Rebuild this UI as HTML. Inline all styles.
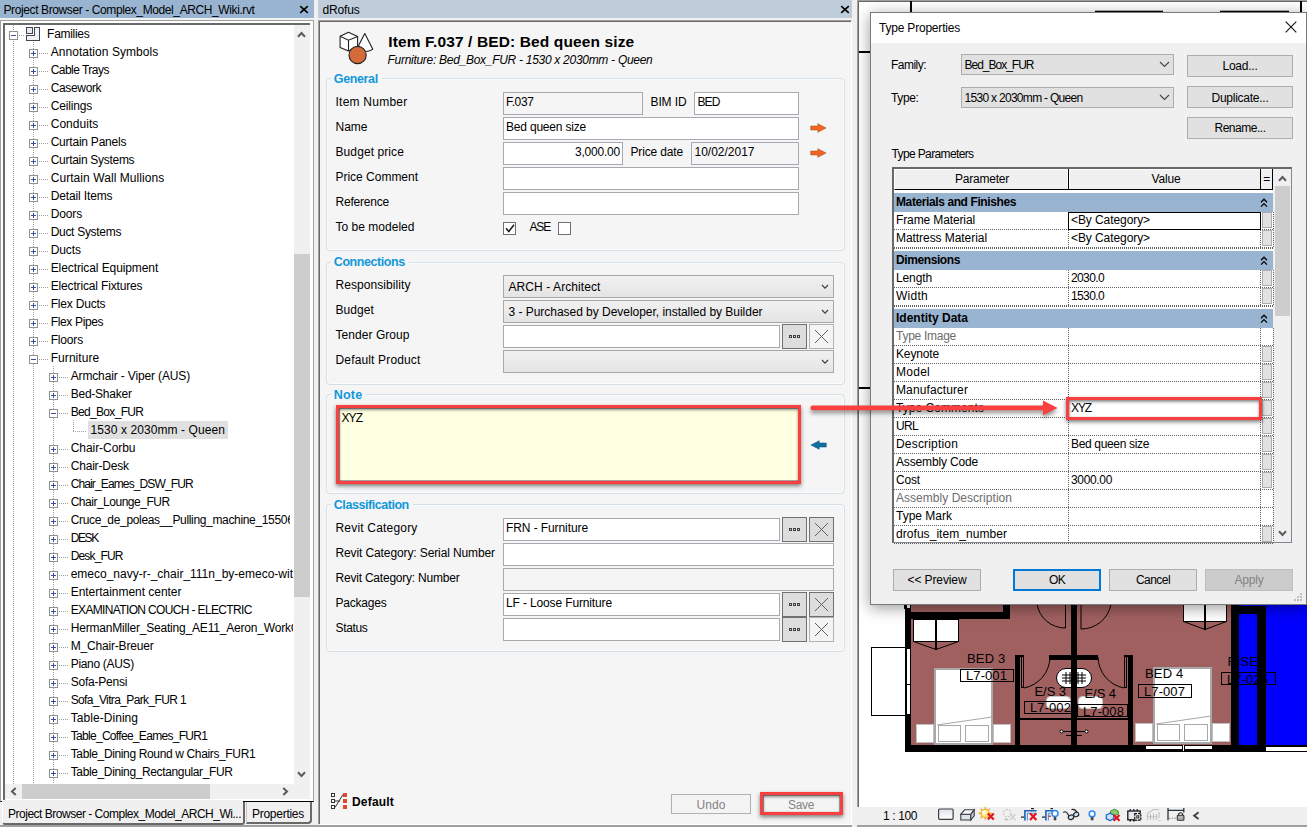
<!DOCTYPE html>
<html lang="en"><head><meta charset="utf-8"><title>dRofus - Type Properties</title>
<style>
html,body{margin:0;padding:0}
body{width:1307px;height:827px;position:relative;overflow:hidden;background:#f0f0f0;font-family:"Liberation Sans", sans-serif;font-size:12px;color:#000}
.t{position:absolute;white-space:pre;display:block}
.r{position:absolute;box-sizing:border-box}
svg{position:absolute;overflow:visible}
</style></head><body>
<div class="r" style="left:0px;top:0px;width:314px;height:18px;background:#99b4d1;"></div>
<span class="t" style="left:3.5px;top:3px;font-size:12px;line-height:15px;letter-spacing:-0.394px;">Project Browser - Complex_Model_ARCH_Wiki.rvt</span>
<svg style="left:299px;top:5px" width="10" height="9" viewBox="0 0 10 9"><path d="M1.2 1.2 L8.8 7.8 M8.8 1.2 L1.2 7.8" stroke="#000" stroke-width="1.7" fill="none"/></svg>
<div class="r" style="left:0px;top:20px;width:314px;height:782px;background:#fff;border:1px solid #a0a0a0;border-bottom:1px solid #000;"></div>
<div class="r" style="left:3px;top:23px;width:307px;height:777px;background:#fff;border-top:2px solid #696969;border-left:2px solid #696969;"></div>
<div class="r" style="left:294px;top:25px;width:16px;height:759px;background:#f0f0f0;"></div>
<div class="r" style="left:294px;top:254px;width:16px;height:343px;background:#cdcdcd;"></div>
<svg style="left:297px;top:31px" width="9" height="7" viewBox="0 0 9 7"><path d="M1 5.700 L4.500 2 L8 5.7" stroke="#5a5a5a" stroke-width="2" fill="none"/></svg>
<svg style="left:297px;top:771px" width="9" height="7" viewBox="0 0 9 7"><path d="M1 1.300 L4.500 5 L8 1.3" stroke="#5a5a5a" stroke-width="2" fill="none"/></svg>
<div class="r" style="left:5px;top:784px;width:289px;height:15px;background:#f0f0f0;"></div>
<div class="r" style="left:294px;top:784px;width:16px;height:15px;background:#f0f0f0;"></div>
<div class="r" style="left:22px;top:784px;width:188px;height:15px;background:#cdcdcd;"></div>
<svg style="left:9.500px;top:787px" width="7" height="9" viewBox="0 0 7 9"><path d="M5.700 1 L2 4.500 L5.7 8" stroke="#5a5a5a" stroke-width="2" fill="none"/></svg>
<svg style="left:281.500px;top:787px" width="7" height="9" viewBox="0 0 7 9"><path d="M1.300 1 L5 4.500 L1.3 8" stroke="#5a5a5a" stroke-width="2" fill="none"/></svg>
<span class="t" style="left:47.1px;top:27px;font-size:12px;line-height:15px;letter-spacing:-0.296px;">Families</span>
<span class="t" style="left:50.7px;top:45px;font-size:12px;line-height:15px;letter-spacing:0.043px;">Annotation Symbols</span>
<span class="t" style="left:50.7px;top:63px;font-size:12px;line-height:15px;letter-spacing:-0.530px;">Cable Trays</span>
<span class="t" style="left:50.7px;top:81px;font-size:12px;line-height:15px;letter-spacing:-0.345px;">Casework</span>
<span class="t" style="left:50.7px;top:99px;font-size:12px;line-height:15px;letter-spacing:-0.148px;">Ceilings</span>
<span class="t" style="left:50.7px;top:117px;font-size:12px;line-height:15px;letter-spacing:0.028px;">Conduits</span>
<span class="t" style="left:50.7px;top:135px;font-size:12px;line-height:15px;letter-spacing:-0.230px;">Curtain Panels</span>
<span class="t" style="left:50.7px;top:153px;font-size:12px;line-height:15px;letter-spacing:-0.295px;">Curtain Systems</span>
<span class="t" style="left:50.7px;top:171px;font-size:12px;line-height:15px;letter-spacing:0.064px;">Curtain Wall Mullions</span>
<span class="t" style="left:50.7px;top:189px;font-size:12px;line-height:15px;letter-spacing:-0.130px;">Detail Items</span>
<span class="t" style="left:50.7px;top:207px;font-size:12px;line-height:15px;letter-spacing:-0.143px;">Doors</span>
<span class="t" style="left:50.7px;top:225px;font-size:12px;line-height:15px;letter-spacing:-0.301px;">Duct Systems</span>
<span class="t" style="left:50.7px;top:243px;font-size:12px;line-height:15px;letter-spacing:-0.077px;">Ducts</span>
<span class="t" style="left:50.7px;top:261px;font-size:12px;line-height:15px;letter-spacing:-0.095px;">Electrical Equipment</span>
<span class="t" style="left:50.7px;top:279px;font-size:12px;line-height:15px;letter-spacing:-0.157px;">Electrical Fixtures</span>
<span class="t" style="left:50.7px;top:297px;font-size:12px;line-height:15px;letter-spacing:-0.199px;">Flex Ducts</span>
<span class="t" style="left:50.7px;top:315px;font-size:12px;line-height:15px;letter-spacing:-0.343px;">Flex Pipes</span>
<span class="t" style="left:50.7px;top:333px;font-size:12px;line-height:15px;letter-spacing:-0.174px;">Floors</span>
<span class="t" style="left:50.7px;top:351px;font-size:12px;line-height:15px;letter-spacing:0.063px;">Furniture</span>
<span class="t" style="left:70.7px;top:369px;font-size:12px;line-height:15px;letter-spacing:-0.144px;">Armchair - Viper (AUS)</span>
<span class="t" style="left:70.7px;top:387px;font-size:12px;line-height:15px;letter-spacing:-0.237px;">Bed-Shaker</span>
<span class="t" style="left:70.7px;top:405px;font-size:12px;line-height:15px;letter-spacing:-0.677px;">Bed_Box_FUR</span>
<div class="r" style="left:88px;top:421px;width:140px;height:18px;background:#e0e0e0;"></div>
<span class="t" style="left:90.4px;top:423px;font-size:12px;line-height:15px;letter-spacing:0.093px;">1530 x 2030mm - Queen</span>
<span class="t" style="left:70.7px;top:441px;font-size:12px;line-height:15px;letter-spacing:-0.051px;">Chair-Corbu</span>
<span class="t" style="left:70.7px;top:459px;font-size:12px;line-height:15px;letter-spacing:-0.192px;">Chair-Desk</span>
<span class="t" style="left:70.7px;top:477px;font-size:12px;line-height:15px;letter-spacing:-0.874px;">Chair_Eames_DSW_FUR</span>
<span class="t" style="left:70.7px;top:495px;font-size:12px;line-height:15px;letter-spacing:-0.490px;">Chair_Lounge_FUR</span>
<span class="t" style="left:70.7px;top:513px;font-size:12px;line-height:15px;width:219.10000000000002px;overflow:hidden;letter-spacing:-0.335px;">Cruce_de_poleas__Pulling_machine_155063</span>
<span class="t" style="left:70.7px;top:531px;font-size:12px;line-height:15px;letter-spacing:-1.397px;">DESK</span>
<span class="t" style="left:70.7px;top:549px;font-size:12px;line-height:15px;letter-spacing:-0.848px;">Desk_FUR</span>
<span class="t" style="left:70.7px;top:567px;font-size:12px;line-height:15px;width:222.10000000000002px;overflow:hidden;letter-spacing:-0.001px;">emeco_navy-r-_chair_111n_by-emeco-with</span>
<span class="t" style="left:70.7px;top:585px;font-size:12px;line-height:15px;letter-spacing:-0.030px;">Entertainment center</span>
<span class="t" style="left:70.7px;top:603px;font-size:12px;line-height:15px;letter-spacing:-0.647px;">EXAMINATION COUCH - ELECTRIC</span>
<span class="t" style="left:70.7px;top:621px;font-size:12px;line-height:15px;width:222.10000000000002px;overflow:hidden;letter-spacing:-0.193px;">HermanMiller_Seating_AE11_Aeron_WorkChair</span>
<span class="t" style="left:70.7px;top:639px;font-size:12px;line-height:15px;letter-spacing:-0.176px;">M_Chair-Breuer</span>
<span class="t" style="left:70.7px;top:657px;font-size:12px;line-height:15px;letter-spacing:-0.309px;">Piano (AUS)</span>
<span class="t" style="left:70.7px;top:675px;font-size:12px;line-height:15px;letter-spacing:-0.220px;">Sofa-Pensi</span>
<span class="t" style="left:70.7px;top:693px;font-size:12px;line-height:15px;letter-spacing:-0.625px;">Sofa_Vitra_Park_FUR 1</span>
<span class="t" style="left:70.7px;top:711px;font-size:12px;line-height:15px;letter-spacing:0.058px;">Table-Dining</span>
<span class="t" style="left:70.7px;top:729px;font-size:12px;line-height:15px;letter-spacing:-0.693px;">Table_Coffee_Eames_FUR1</span>
<span class="t" style="left:70.7px;top:747px;font-size:12px;line-height:15px;letter-spacing:-0.360px;">Table_Dining Round w Chairs_FUR1</span>
<span class="t" style="left:70.7px;top:765px;font-size:12px;line-height:15px;letter-spacing:-0.365px;">Table_Dining_Rectangular_FUR</span>
<svg style="left:0;top:0" width="314" height="800" viewBox="0 0 314 800" shape-rendering="crispEdges"><path d="M13.5 25 V784" stroke="#a0a0a0" stroke-width="1" stroke-dasharray="1 1" fill="none"/><path d="M33.5 42 V784" stroke="#a0a0a0" stroke-width="1" stroke-dasharray="1 1" fill="none"/><path d="M53.5 366 V784" stroke="#a0a0a0" stroke-width="1" stroke-dasharray="1 1" fill="none"/><path d="M73.5 420 V431" stroke="#a0a0a0" stroke-width="1" stroke-dasharray="1 1" fill="none"/><path d="M19 35.5 H25" stroke="#a0a0a0" stroke-width="1" stroke-dasharray="1 1" fill="none"/><rect x="9.5" y="31.5" width="8" height="8" rx="1" fill="#fff" stroke="#919191"/><path d="M11 35.5 H16" stroke="#3a4fa0" stroke-width="1"/><path d="M39 53.5 H48" stroke="#a0a0a0" stroke-width="1" stroke-dasharray="1 1" fill="none"/><rect x="29.5" y="49.5" width="8" height="8" rx="1" fill="#fff" stroke="#919191"/><path d="M31 53.5 H36" stroke="#3a4fa0" stroke-width="1"/><path d="M33.5 51 V56" stroke="#3a4fa0" stroke-width="1"/><path d="M39 71.5 H48" stroke="#a0a0a0" stroke-width="1" stroke-dasharray="1 1" fill="none"/><rect x="29.5" y="67.5" width="8" height="8" rx="1" fill="#fff" stroke="#919191"/><path d="M31 71.5 H36" stroke="#3a4fa0" stroke-width="1"/><path d="M33.5 69 V74" stroke="#3a4fa0" stroke-width="1"/><path d="M39 89.5 H48" stroke="#a0a0a0" stroke-width="1" stroke-dasharray="1 1" fill="none"/><rect x="29.5" y="85.5" width="8" height="8" rx="1" fill="#fff" stroke="#919191"/><path d="M31 89.5 H36" stroke="#3a4fa0" stroke-width="1"/><path d="M33.5 87 V92" stroke="#3a4fa0" stroke-width="1"/><path d="M39 107.5 H48" stroke="#a0a0a0" stroke-width="1" stroke-dasharray="1 1" fill="none"/><rect x="29.5" y="103.5" width="8" height="8" rx="1" fill="#fff" stroke="#919191"/><path d="M31 107.5 H36" stroke="#3a4fa0" stroke-width="1"/><path d="M33.5 105 V110" stroke="#3a4fa0" stroke-width="1"/><path d="M39 125.5 H48" stroke="#a0a0a0" stroke-width="1" stroke-dasharray="1 1" fill="none"/><rect x="29.5" y="121.5" width="8" height="8" rx="1" fill="#fff" stroke="#919191"/><path d="M31 125.5 H36" stroke="#3a4fa0" stroke-width="1"/><path d="M33.5 123 V128" stroke="#3a4fa0" stroke-width="1"/><path d="M39 143.5 H48" stroke="#a0a0a0" stroke-width="1" stroke-dasharray="1 1" fill="none"/><rect x="29.5" y="139.5" width="8" height="8" rx="1" fill="#fff" stroke="#919191"/><path d="M31 143.5 H36" stroke="#3a4fa0" stroke-width="1"/><path d="M33.5 141 V146" stroke="#3a4fa0" stroke-width="1"/><path d="M39 161.5 H48" stroke="#a0a0a0" stroke-width="1" stroke-dasharray="1 1" fill="none"/><rect x="29.5" y="157.5" width="8" height="8" rx="1" fill="#fff" stroke="#919191"/><path d="M31 161.5 H36" stroke="#3a4fa0" stroke-width="1"/><path d="M33.5 159 V164" stroke="#3a4fa0" stroke-width="1"/><path d="M39 179.5 H48" stroke="#a0a0a0" stroke-width="1" stroke-dasharray="1 1" fill="none"/><rect x="29.5" y="175.5" width="8" height="8" rx="1" fill="#fff" stroke="#919191"/><path d="M31 179.5 H36" stroke="#3a4fa0" stroke-width="1"/><path d="M33.5 177 V182" stroke="#3a4fa0" stroke-width="1"/><path d="M39 197.5 H48" stroke="#a0a0a0" stroke-width="1" stroke-dasharray="1 1" fill="none"/><rect x="29.5" y="193.5" width="8" height="8" rx="1" fill="#fff" stroke="#919191"/><path d="M31 197.5 H36" stroke="#3a4fa0" stroke-width="1"/><path d="M33.5 195 V200" stroke="#3a4fa0" stroke-width="1"/><path d="M39 215.5 H48" stroke="#a0a0a0" stroke-width="1" stroke-dasharray="1 1" fill="none"/><rect x="29.5" y="211.5" width="8" height="8" rx="1" fill="#fff" stroke="#919191"/><path d="M31 215.5 H36" stroke="#3a4fa0" stroke-width="1"/><path d="M33.5 213 V218" stroke="#3a4fa0" stroke-width="1"/><path d="M39 233.5 H48" stroke="#a0a0a0" stroke-width="1" stroke-dasharray="1 1" fill="none"/><rect x="29.5" y="229.5" width="8" height="8" rx="1" fill="#fff" stroke="#919191"/><path d="M31 233.5 H36" stroke="#3a4fa0" stroke-width="1"/><path d="M33.5 231 V236" stroke="#3a4fa0" stroke-width="1"/><path d="M39 251.5 H48" stroke="#a0a0a0" stroke-width="1" stroke-dasharray="1 1" fill="none"/><rect x="29.5" y="247.5" width="8" height="8" rx="1" fill="#fff" stroke="#919191"/><path d="M31 251.5 H36" stroke="#3a4fa0" stroke-width="1"/><path d="M33.5 249 V254" stroke="#3a4fa0" stroke-width="1"/><path d="M39 269.5 H48" stroke="#a0a0a0" stroke-width="1" stroke-dasharray="1 1" fill="none"/><rect x="29.5" y="265.5" width="8" height="8" rx="1" fill="#fff" stroke="#919191"/><path d="M31 269.5 H36" stroke="#3a4fa0" stroke-width="1"/><path d="M33.5 267 V272" stroke="#3a4fa0" stroke-width="1"/><path d="M39 287.5 H48" stroke="#a0a0a0" stroke-width="1" stroke-dasharray="1 1" fill="none"/><rect x="29.5" y="283.5" width="8" height="8" rx="1" fill="#fff" stroke="#919191"/><path d="M31 287.5 H36" stroke="#3a4fa0" stroke-width="1"/><path d="M33.5 285 V290" stroke="#3a4fa0" stroke-width="1"/><path d="M39 305.5 H48" stroke="#a0a0a0" stroke-width="1" stroke-dasharray="1 1" fill="none"/><rect x="29.5" y="301.5" width="8" height="8" rx="1" fill="#fff" stroke="#919191"/><path d="M31 305.5 H36" stroke="#3a4fa0" stroke-width="1"/><path d="M33.5 303 V308" stroke="#3a4fa0" stroke-width="1"/><path d="M39 323.5 H48" stroke="#a0a0a0" stroke-width="1" stroke-dasharray="1 1" fill="none"/><rect x="29.5" y="319.5" width="8" height="8" rx="1" fill="#fff" stroke="#919191"/><path d="M31 323.5 H36" stroke="#3a4fa0" stroke-width="1"/><path d="M33.5 321 V326" stroke="#3a4fa0" stroke-width="1"/><path d="M39 341.5 H48" stroke="#a0a0a0" stroke-width="1" stroke-dasharray="1 1" fill="none"/><rect x="29.5" y="337.5" width="8" height="8" rx="1" fill="#fff" stroke="#919191"/><path d="M31 341.5 H36" stroke="#3a4fa0" stroke-width="1"/><path d="M33.5 339 V344" stroke="#3a4fa0" stroke-width="1"/><path d="M39 359.5 H48" stroke="#a0a0a0" stroke-width="1" stroke-dasharray="1 1" fill="none"/><rect x="29.5" y="355.5" width="8" height="8" rx="1" fill="#fff" stroke="#919191"/><path d="M31 359.5 H36" stroke="#3a4fa0" stroke-width="1"/><path d="M59 377.5 H68" stroke="#a0a0a0" stroke-width="1" stroke-dasharray="1 1" fill="none"/><rect x="49.5" y="373.5" width="8" height="8" rx="1" fill="#fff" stroke="#919191"/><path d="M51 377.5 H56" stroke="#3a4fa0" stroke-width="1"/><path d="M53.5 375 V380" stroke="#3a4fa0" stroke-width="1"/><path d="M59 395.5 H68" stroke="#a0a0a0" stroke-width="1" stroke-dasharray="1 1" fill="none"/><rect x="49.5" y="391.5" width="8" height="8" rx="1" fill="#fff" stroke="#919191"/><path d="M51 395.5 H56" stroke="#3a4fa0" stroke-width="1"/><path d="M53.5 393 V398" stroke="#3a4fa0" stroke-width="1"/><path d="M59 413.5 H68" stroke="#a0a0a0" stroke-width="1" stroke-dasharray="1 1" fill="none"/><rect x="49.5" y="409.5" width="8" height="8" rx="1" fill="#fff" stroke="#919191"/><path d="M51 413.5 H56" stroke="#3a4fa0" stroke-width="1"/><path d="M73 431.5 H87" stroke="#a0a0a0" stroke-width="1" stroke-dasharray="1 1" fill="none"/><path d="M59 449.5 H68" stroke="#a0a0a0" stroke-width="1" stroke-dasharray="1 1" fill="none"/><rect x="49.5" y="445.5" width="8" height="8" rx="1" fill="#fff" stroke="#919191"/><path d="M51 449.5 H56" stroke="#3a4fa0" stroke-width="1"/><path d="M53.5 447 V452" stroke="#3a4fa0" stroke-width="1"/><path d="M59 467.5 H68" stroke="#a0a0a0" stroke-width="1" stroke-dasharray="1 1" fill="none"/><rect x="49.5" y="463.5" width="8" height="8" rx="1" fill="#fff" stroke="#919191"/><path d="M51 467.5 H56" stroke="#3a4fa0" stroke-width="1"/><path d="M53.5 465 V470" stroke="#3a4fa0" stroke-width="1"/><path d="M59 485.5 H68" stroke="#a0a0a0" stroke-width="1" stroke-dasharray="1 1" fill="none"/><rect x="49.5" y="481.5" width="8" height="8" rx="1" fill="#fff" stroke="#919191"/><path d="M51 485.5 H56" stroke="#3a4fa0" stroke-width="1"/><path d="M53.5 483 V488" stroke="#3a4fa0" stroke-width="1"/><path d="M59 503.5 H68" stroke="#a0a0a0" stroke-width="1" stroke-dasharray="1 1" fill="none"/><rect x="49.5" y="499.5" width="8" height="8" rx="1" fill="#fff" stroke="#919191"/><path d="M51 503.5 H56" stroke="#3a4fa0" stroke-width="1"/><path d="M53.5 501 V506" stroke="#3a4fa0" stroke-width="1"/><path d="M59 521.5 H68" stroke="#a0a0a0" stroke-width="1" stroke-dasharray="1 1" fill="none"/><rect x="49.5" y="517.5" width="8" height="8" rx="1" fill="#fff" stroke="#919191"/><path d="M51 521.5 H56" stroke="#3a4fa0" stroke-width="1"/><path d="M53.5 519 V524" stroke="#3a4fa0" stroke-width="1"/><path d="M59 539.5 H68" stroke="#a0a0a0" stroke-width="1" stroke-dasharray="1 1" fill="none"/><rect x="49.5" y="535.5" width="8" height="8" rx="1" fill="#fff" stroke="#919191"/><path d="M51 539.5 H56" stroke="#3a4fa0" stroke-width="1"/><path d="M53.5 537 V542" stroke="#3a4fa0" stroke-width="1"/><path d="M59 557.5 H68" stroke="#a0a0a0" stroke-width="1" stroke-dasharray="1 1" fill="none"/><rect x="49.5" y="553.5" width="8" height="8" rx="1" fill="#fff" stroke="#919191"/><path d="M51 557.5 H56" stroke="#3a4fa0" stroke-width="1"/><path d="M53.5 555 V560" stroke="#3a4fa0" stroke-width="1"/><path d="M59 575.5 H68" stroke="#a0a0a0" stroke-width="1" stroke-dasharray="1 1" fill="none"/><rect x="49.5" y="571.5" width="8" height="8" rx="1" fill="#fff" stroke="#919191"/><path d="M51 575.5 H56" stroke="#3a4fa0" stroke-width="1"/><path d="M53.5 573 V578" stroke="#3a4fa0" stroke-width="1"/><path d="M59 593.5 H68" stroke="#a0a0a0" stroke-width="1" stroke-dasharray="1 1" fill="none"/><rect x="49.5" y="589.5" width="8" height="8" rx="1" fill="#fff" stroke="#919191"/><path d="M51 593.5 H56" stroke="#3a4fa0" stroke-width="1"/><path d="M53.5 591 V596" stroke="#3a4fa0" stroke-width="1"/><path d="M59 611.5 H68" stroke="#a0a0a0" stroke-width="1" stroke-dasharray="1 1" fill="none"/><rect x="49.5" y="607.5" width="8" height="8" rx="1" fill="#fff" stroke="#919191"/><path d="M51 611.5 H56" stroke="#3a4fa0" stroke-width="1"/><path d="M53.5 609 V614" stroke="#3a4fa0" stroke-width="1"/><path d="M59 629.5 H68" stroke="#a0a0a0" stroke-width="1" stroke-dasharray="1 1" fill="none"/><rect x="49.5" y="625.5" width="8" height="8" rx="1" fill="#fff" stroke="#919191"/><path d="M51 629.5 H56" stroke="#3a4fa0" stroke-width="1"/><path d="M53.5 627 V632" stroke="#3a4fa0" stroke-width="1"/><path d="M59 647.5 H68" stroke="#a0a0a0" stroke-width="1" stroke-dasharray="1 1" fill="none"/><rect x="49.5" y="643.5" width="8" height="8" rx="1" fill="#fff" stroke="#919191"/><path d="M51 647.5 H56" stroke="#3a4fa0" stroke-width="1"/><path d="M53.5 645 V650" stroke="#3a4fa0" stroke-width="1"/><path d="M59 665.5 H68" stroke="#a0a0a0" stroke-width="1" stroke-dasharray="1 1" fill="none"/><rect x="49.5" y="661.5" width="8" height="8" rx="1" fill="#fff" stroke="#919191"/><path d="M51 665.5 H56" stroke="#3a4fa0" stroke-width="1"/><path d="M53.5 663 V668" stroke="#3a4fa0" stroke-width="1"/><path d="M59 683.5 H68" stroke="#a0a0a0" stroke-width="1" stroke-dasharray="1 1" fill="none"/><rect x="49.5" y="679.5" width="8" height="8" rx="1" fill="#fff" stroke="#919191"/><path d="M51 683.5 H56" stroke="#3a4fa0" stroke-width="1"/><path d="M53.5 681 V686" stroke="#3a4fa0" stroke-width="1"/><path d="M59 701.5 H68" stroke="#a0a0a0" stroke-width="1" stroke-dasharray="1 1" fill="none"/><rect x="49.5" y="697.5" width="8" height="8" rx="1" fill="#fff" stroke="#919191"/><path d="M51 701.5 H56" stroke="#3a4fa0" stroke-width="1"/><path d="M53.5 699 V704" stroke="#3a4fa0" stroke-width="1"/><path d="M59 719.5 H68" stroke="#a0a0a0" stroke-width="1" stroke-dasharray="1 1" fill="none"/><rect x="49.5" y="715.5" width="8" height="8" rx="1" fill="#fff" stroke="#919191"/><path d="M51 719.5 H56" stroke="#3a4fa0" stroke-width="1"/><path d="M53.5 717 V722" stroke="#3a4fa0" stroke-width="1"/><path d="M59 737.5 H68" stroke="#a0a0a0" stroke-width="1" stroke-dasharray="1 1" fill="none"/><rect x="49.5" y="733.5" width="8" height="8" rx="1" fill="#fff" stroke="#919191"/><path d="M51 737.5 H56" stroke="#3a4fa0" stroke-width="1"/><path d="M53.5 735 V740" stroke="#3a4fa0" stroke-width="1"/><path d="M59 755.5 H68" stroke="#a0a0a0" stroke-width="1" stroke-dasharray="1 1" fill="none"/><rect x="49.5" y="751.5" width="8" height="8" rx="1" fill="#fff" stroke="#919191"/><path d="M51 755.5 H56" stroke="#3a4fa0" stroke-width="1"/><path d="M53.5 753 V758" stroke="#3a4fa0" stroke-width="1"/><path d="M59 773.5 H68" stroke="#a0a0a0" stroke-width="1" stroke-dasharray="1 1" fill="none"/><rect x="49.5" y="769.5" width="8" height="8" rx="1" fill="#fff" stroke="#919191"/><path d="M51 773.5 H56" stroke="#3a4fa0" stroke-width="1"/><path d="M53.5 771 V776" stroke="#3a4fa0" stroke-width="1"/><path d="M26.5 27.5 H32.5 V33.5 H26.5 Z" fill="#e8eaee" stroke="#3f4650"/><path d="M34.5 27.5 H39.5 V40.5 H26.5 V35.5 H34.5 Z" fill="#eef0f3" stroke="#3f4650"/></svg>
<div class="r" style="left:2px;top:802px;width:243px;height:23px;background:#f0f0f0;border-left:1px solid #fff;border-radius:0 0 3px 3px;border-right:2px solid #696969;border-bottom:2px solid #696969;"></div>
<div class="r" style="left:2px;top:800px;width:241px;height:3px;background:#f0f0f0;"></div>
<span class="t" style="left:8.0px;top:807px;font-size:12px;line-height:15px;letter-spacing:-0.486px;">Project Browser - Complex_Model_ARCH_Wi...</span>
<div class="r" style="left:246px;top:802px;width:66px;height:22px;background:#f0f0f0;border:1px solid #c8c8c8;border-top:none;border-radius:0 0 4px 0;border-bottom:2px solid #696969;border-right:2px solid #696969;"></div>
<span class="t" style="left:252.0px;top:807px;font-size:12px;line-height:15px;letter-spacing:-0.270px;">Properties</span>
<div class="r" style="left:0px;top:825px;width:1307px;height:2px;background:#a0a0a0;"></div>
<div class="r" style="left:318px;top:0px;width:535px;height:18px;background:#bfcddb;"></div>
<span class="t" style="left:322.5px;top:3px;font-size:12px;line-height:15px;letter-spacing:-0.172px;">dRofus</span>
<svg style="left:840px;top:5px" width="10" height="9" viewBox="0 0 10 9"><path d="M1.2 1.2 L8.8 7.8 M8.8 1.2 L1.2 7.8" stroke="#000" stroke-width="1.7" fill="none"/></svg>
<div class="r" style="left:318px;top:20px;width:534px;height:805px;background:#f5f5f5;border:1px solid #a0a0a0;box-shadow:inset 1px 1px 0 #696969;border-right:1px solid #fff;border-bottom:1px solid #fff;"></div>
<svg style="left:338px;top:30px" width="38" height="36" viewBox="0 0 38 36">
<path d="M2.1 6.2 L10.5 2.2 L19.6 6.5 L19.6 17 L10.5 21 L2.1 17.4 Z" fill="#fff" stroke="#222" stroke-width="1.1" stroke-linejoin="round"/>
<path d="M2.1 6.2 L10.5 10.2 L19.6 6.500 M10.5 10.2 V21" fill="none" stroke="#222" stroke-width="1.1"/>
<path d="M26.8 3.6 L34.8 19.2 Q31 22.5 24 21 L20.6 15.6 Z" fill="#fff" stroke="#222" stroke-width="1.1" stroke-linejoin="round"/>
<circle cx="19.6" cy="25" r="8.6" fill="#d56a3b" stroke="#222" stroke-width="1.1"/>
</svg>
<span class="t" style="left:388.3px;top:32px;font-size:15.5px;line-height:19px;font-weight:bold;letter-spacing:0.124px;">Item F.037 / BED: Bed queen size</span>
<span class="t" style="left:387.5px;top:53px;font-size:12px;line-height:15px;font-style:italic;letter-spacing:-0.286px;">Furniture: Bed_Box_FUR - 1530 x 2030mm - Queen</span>
<div class="r" style="left:326px;top:78px;width:519px;height:173px;border:1px solid #d5dfe5;border-radius:4px;box-shadow:inset 0 0 0 1px #fbfcfd;"></div>
<div class="r" style="left:331px;top:76px;width:51px;height:5px;background:#f5f5f5;"></div>
<span class="t" style="left:333.8px;top:71px;font-size:12.5px;line-height:16px;font-weight:bold;color:#1198db;letter-spacing:-0.366px;">General</span>
<span class="t" style="left:335.5px;top:95px;font-size:12px;line-height:15px;letter-spacing:0.240px;">Item Number</span>
<span class="t" style="left:335.5px;top:120px;font-size:12px;line-height:15px;letter-spacing:-0.004px;">Name</span>
<span class="t" style="left:335.5px;top:145px;font-size:12px;line-height:15px;letter-spacing:0.092px;">Budget price</span>
<span class="t" style="left:335.5px;top:170px;font-size:12px;line-height:15px;letter-spacing:-0.014px;">Price Comment</span>
<span class="t" style="left:335.5px;top:195px;font-size:12px;line-height:15px;letter-spacing:-0.208px;">Reference</span>
<span class="t" style="left:335.5px;top:220px;font-size:12px;line-height:15px;letter-spacing:0.020px;">To be modeled</span>
<div class="r" style="left:503px;top:92px;width:140px;height:23px;background:#f5f5f5;border:1px solid #a6a9af;"></div>
<span class="t" style="left:506.0px;top:95px;font-size:12px;line-height:15px;letter-spacing:-0.372px;">F.037</span>
<span class="t" style="left:650.5px;top:95px;font-size:12px;line-height:15px;letter-spacing:-0.112px;">BIM ID</span>
<div class="r" style="left:694px;top:92px;width:105px;height:23px;background:#fff;border:1px solid #a6a9af;"></div>
<span class="t" style="left:697.5px;top:95px;font-size:12px;line-height:15px;letter-spacing:-0.896px;">BED</span>
<div class="r" style="left:503px;top:117px;width:296px;height:23px;background:#fff;border:1px solid #a6a9af;"></div>
<span class="t" style="left:506.0px;top:120px;font-size:12px;line-height:15px;letter-spacing:-0.195px;">Bed queen size</span>
<div class="r" style="left:503px;top:142px;width:120px;height:23px;background:#fff;border:1px solid #a6a9af;"></div>
<span class="t" style="left:575.0px;top:145px;font-size:12px;line-height:15px;letter-spacing:-0.215px;">3,000.00</span>
<span class="t" style="left:630.5px;top:145px;font-size:12px;line-height:15px;letter-spacing:-0.153px;">Price date</span>
<div class="r" style="left:691px;top:142px;width:108px;height:23px;background:#f5f5f5;border:1px solid #a6a9af;"></div>
<span class="t" style="left:694.5px;top:145px;font-size:12px;line-height:15px;letter-spacing:-0.006px;">10/02/2017</span>
<div class="r" style="left:503px;top:167px;width:296px;height:23px;background:#fff;border:1px solid #a6a9af;"></div>
<div class="r" style="left:503px;top:192px;width:296px;height:23px;background:#fff;border:1px solid #a6a9af;"></div>
<div class="r" style="left:503px;top:222px;width:13px;height:13px;background:#fff;border:1px solid #707070;"></div>
<svg style="left:505px;top:224px" width="10" height="9" viewBox="0 0 10 9"><path d="M1 4.2 L3.8 7.5 L9 0.8" stroke="#1a1a1a" stroke-width="1.5" fill="none"/></svg>
<span class="t" style="left:529.5px;top:220px;font-size:12px;line-height:15px;letter-spacing:-1.172px;">ASE</span>
<div class="r" style="left:558px;top:222px;width:13px;height:13px;background:#fff;border:1px solid #707070;"></div>
<svg style="left:810px;top:123.4px" width="17" height="10" viewBox="0 0 17 10"><path d="M0.7 3 H7.800 V0.7 L16.1 5 L7.8 9.3 V7 H0.7 Z" fill="#f26522" stroke="#9a4a20" stroke-width="0.5"/></svg>
<svg style="left:810px;top:148.4px" width="17" height="10" viewBox="0 0 17 10"><path d="M0.7 3 H7.800 V0.7 L16.1 5 L7.8 9.3 V7 H0.7 Z" fill="#f26522" stroke="#9a4a20" stroke-width="0.5"/></svg>
<div class="r" style="left:326px;top:262px;width:519px;height:123px;border:1px solid #d5dfe5;border-radius:4px;box-shadow:inset 0 0 0 1px #fbfcfd;"></div>
<div class="r" style="left:331px;top:260px;width:78px;height:5px;background:#f5f5f5;"></div>
<span class="t" style="left:333.8px;top:254px;font-size:12.5px;line-height:16px;font-weight:bold;color:#1198db;letter-spacing:-0.428px;">Connections</span>
<span class="t" style="left:335.5px;top:278px;font-size:12px;line-height:15px;letter-spacing:0.068px;">Responsibility</span>
<span class="t" style="left:335.5px;top:303px;font-size:12px;line-height:15px;letter-spacing:0.076px;">Budget</span>
<span class="t" style="left:335.5px;top:328px;font-size:12px;line-height:15px;letter-spacing:0.051px;">Tender Group</span>
<span class="t" style="left:335.5px;top:353px;font-size:12px;line-height:15px;letter-spacing:0.152px;">Default Product</span>
<div class="r" style="left:503px;top:275px;width:331px;height:23px;border:1px solid #a8a8a8;background:linear-gradient(#f1f1f1,#e4e4e4);"></div>
<svg style="left:821px;top:284px" width="8" height="6" viewBox="0 0 8 6"><path d="M1 1 L4 4.2 L7 1" stroke="#404040" stroke-width="1.2" fill="none"/></svg>
<span class="t" style="left:508.5px;top:280px;font-size:12px;line-height:15px;letter-spacing:0.082px;">ARCH - Architect</span>
<div class="r" style="left:503px;top:300px;width:331px;height:23px;border:1px solid #a8a8a8;background:linear-gradient(#f1f1f1,#e4e4e4);"></div>
<svg style="left:821px;top:309px" width="8" height="6" viewBox="0 0 8 6"><path d="M1 1 L4 4.2 L7 1" stroke="#404040" stroke-width="1.2" fill="none"/></svg>
<span class="t" style="left:508.5px;top:305px;font-size:12px;line-height:15px;letter-spacing:-0.031px;">3 - Purchased by Developer, installed by Builder</span>
<div class="r" style="left:503px;top:325px;width:277px;height:23px;background:#fff;border:1px solid #a6a9af;"></div>
<div class="r" style="left:782px;top:324px;width:25px;height:25px;background:#dddddd;border:1px solid #707070;"></div>
<svg style="left:789px;top:335px" width="12" height="3" viewBox="0 0 12 3" shape-rendering="crispEdges"><path d="M0.5 0.5h2v2h-2z M4.5 0.5h2v2h-2z M8.5 0.5h2v2h-2z" fill="none" stroke="#404040" stroke-width="1"/></svg>
<div class="r" style="left:809px;top:324px;width:25px;height:25px;background:#f4f4f4;border:1px solid #adb2b5;"></div>
<svg style="left:814px;top:329px" width="15" height="15" viewBox="0 0 15 15"><path d="M1 1 L14 14 M14 1 L1 14" stroke="#606060" stroke-width="1" fill="none"/></svg>
<div class="r" style="left:503px;top:350px;width:331px;height:23px;border:1px solid #a8a8a8;background:linear-gradient(#f1f1f1,#e4e4e4);"></div>
<svg style="left:821px;top:359px" width="8" height="6" viewBox="0 0 8 6"><path d="M1 1 L4 4.2 L7 1" stroke="#404040" stroke-width="1.2" fill="none"/></svg>
<div class="r" style="left:326px;top:394px;width:519px;height:100px;border:1px solid #d5dfe5;border-radius:4px;box-shadow:inset 0 0 0 1px #fbfcfd;"></div>
<div class="r" style="left:331px;top:392px;width:35.5px;height:5px;background:#f5f5f5;"></div>
<span class="t" style="left:333.8px;top:387px;font-size:12.5px;line-height:16px;font-weight:bold;color:#1198db;letter-spacing:0.180px;">Note</span>
<div class="r" style="left:339px;top:408px;width:460px;height:73px;background:#ffffe1;border:1px solid #abadb3;"></div>
<span class="t" style="left:341.5px;top:411px;font-size:12px;line-height:15px;letter-spacing:-0.881px;">XYZ</span>
<svg style="left:810.3px;top:440.4px" width="17" height="10" viewBox="0 0 17 10"><path transform="translate(17,0) scale(-1,1)" d="M0.7 3 H7.800 V0.7 L16.1 5 L7.8 9.3 V7 H0.7 Z" fill="#0f6fa3" stroke="#0a4a70" stroke-width="0.5"/></svg>
<div class="r" style="left:326px;top:504px;width:519px;height:148px;border:1px solid #d5dfe5;border-radius:4px;box-shadow:inset 0 0 0 1px #fbfcfd;"></div>
<div class="r" style="left:331px;top:502px;width:82px;height:5px;background:#f5f5f5;"></div>
<span class="t" style="left:333.8px;top:497px;font-size:12.5px;line-height:16px;font-weight:bold;color:#1198db;letter-spacing:-0.449px;">Classification</span>
<span class="t" style="left:335.5px;top:521px;font-size:12px;line-height:15px;letter-spacing:0.188px;">Revit Category</span>
<span class="t" style="left:335.5px;top:546px;font-size:12px;line-height:15px;letter-spacing:-0.112px;">Revit Category: Serial Number</span>
<span class="t" style="left:335.5px;top:571px;font-size:12px;line-height:15px;letter-spacing:-0.214px;">Revit Category: Number</span>
<span class="t" style="left:335.5px;top:596px;font-size:12px;line-height:15px;letter-spacing:-0.213px;">Packages</span>
<span class="t" style="left:335.5px;top:621px;font-size:12px;line-height:15px;letter-spacing:-0.339px;">Status</span>
<div class="r" style="left:503px;top:518px;width:277px;height:23px;background:#fff;border:1px solid #a6a9af;"></div>
<span class="t" style="left:506.0px;top:521px;font-size:12px;line-height:15px;letter-spacing:-0.090px;">FRN - Furniture</span>
<div class="r" style="left:782px;top:517px;width:25px;height:25px;background:#dddddd;border:1px solid #707070;"></div>
<svg style="left:789px;top:528px" width="12" height="3" viewBox="0 0 12 3" shape-rendering="crispEdges"><path d="M0.5 0.5h2v2h-2z M4.5 0.5h2v2h-2z M8.5 0.5h2v2h-2z" fill="none" stroke="#404040" stroke-width="1"/></svg>
<div class="r" style="left:809px;top:517px;width:25px;height:25px;background:#dddddd;border:1px solid #707070;"></div>
<svg style="left:814px;top:522px" width="15" height="15" viewBox="0 0 15 15"><path d="M1 1 L14 14 M14 1 L1 14" stroke="#606060" stroke-width="1" fill="none"/></svg>
<div class="r" style="left:503px;top:543px;width:331px;height:23px;background:#fff;border:1px solid #a6a9af;"></div>
<div class="r" style="left:503px;top:568px;width:331px;height:23px;background:#f5f5f5;border:1px solid #a6a9af;"></div>
<div class="r" style="left:503px;top:593px;width:277px;height:23px;background:#fff;border:1px solid #a6a9af;"></div>
<span class="t" style="left:506.0px;top:596px;font-size:12px;line-height:15px;letter-spacing:-0.136px;">LF - Loose Furniture</span>
<div class="r" style="left:782px;top:592px;width:25px;height:25px;background:#dddddd;border:1px solid #707070;"></div>
<svg style="left:789px;top:603px" width="12" height="3" viewBox="0 0 12 3" shape-rendering="crispEdges"><path d="M0.5 0.5h2v2h-2z M4.5 0.5h2v2h-2z M8.5 0.5h2v2h-2z" fill="none" stroke="#404040" stroke-width="1"/></svg>
<div class="r" style="left:809px;top:592px;width:25px;height:25px;background:#dddddd;border:1px solid #707070;"></div>
<svg style="left:814px;top:597px" width="15" height="15" viewBox="0 0 15 15"><path d="M1 1 L14 14 M14 1 L1 14" stroke="#606060" stroke-width="1" fill="none"/></svg>
<div class="r" style="left:503px;top:618px;width:277px;height:23px;background:#fff;border:1px solid #a6a9af;"></div>
<div class="r" style="left:782px;top:617px;width:25px;height:25px;background:#dddddd;border:1px solid #707070;"></div>
<svg style="left:789px;top:628px" width="12" height="3" viewBox="0 0 12 3" shape-rendering="crispEdges"><path d="M0.5 0.5h2v2h-2z M4.5 0.5h2v2h-2z M8.5 0.5h2v2h-2z" fill="none" stroke="#404040" stroke-width="1"/></svg>
<div class="r" style="left:809px;top:617px;width:25px;height:25px;background:#f4f4f4;border:1px solid #adb2b5;"></div>
<svg style="left:814px;top:622px" width="15" height="15" viewBox="0 0 15 15"><path d="M1 1 L14 14 M14 1 L1 14" stroke="#606060" stroke-width="1" fill="none"/></svg>
<svg style="left:331px;top:793px" width="17" height="17" viewBox="0 0 17 17" shape-rendering="crispEdges">
<path d="M0.5 0.5h3v3h-3z M0.5 6.5h3v3h-3z M0.5 12.5h3v3h-3z" fill="#fff" stroke="#333"/>
<path d="M4 8 H9 M4 14.5 L12 1.5" stroke="#333" fill="none" shape-rendering="auto"/>
<path d="M12 0h4v4h-4z M12 6h4v4h-4z M12 12h4v4h-4z" fill="#e0482a"/>
</svg>
<span class="t" style="left:352.0px;top:795px;font-size:12px;line-height:15px;font-weight:bold;letter-spacing:0.190px;">Default</span>
<div class="r" style="left:671px;top:794px;width:80px;height:20px;background:#f4f4f4;border:1px solid #adb2b5;"></div>
<span class="t" style="left:696.5px;top:798px;font-size:12px;line-height:15px;color:#838383;letter-spacing:0.078px;">Undo</span>
<div class="r" style="left:763px;top:795px;width:77px;height:18px;background:#f4f4f4;border:1px solid #adb2b5;"></div>
<span class="t" style="left:788.0px;top:798px;font-size:12px;line-height:15px;color:#838383;letter-spacing:-0.340px;">Save</span>
<div class="r" style="left:852px;top:0px;width:5px;height:827px;background:#f0f0f0;"></div>
<div class="r" style="left:857px;top:0px;width:450px;height:807px;background:#fff;border:0;border-left:1px solid #a0a0a0;border-top:1px solid #a0a0a0;box-shadow:inset 1px 1px 0 #696969;"></div>
<svg style="left:0;top:0" width="1307" height="827" viewBox="0 0 1307 827"><g shape-rendering="crispEdges"><rect x="910" y="1" width="2" height="11" fill="#000"/><rect x="1095" y="10.700" width="68" height="1.3" fill="#000" shape-rendering="auto"/><rect x="1220" y="10.7" width="69" height="1.3" fill="#000" shape-rendering="auto"/><rect x="1300" y="1" width="2" height="11" fill="#000"/><rect x="859" y="51" width="12" height="2" fill="#000"/><rect x="859" y="387" width="12" height="2" fill="#000"/><rect x="905" y="600" width="334" height="151" fill="#a06060"/><rect x="1239" y="600" width="68" height="145" fill="#0000ff"/><rect x="1266" y="745" width="41" height="7" fill="#000"/><rect x="1266" y="747" width="41" height="4" fill="#fff"/><rect x="905" y="600" width="6" height="151" fill="#000"/><rect x="904" y="600" width="2" height="9" fill="#000"/><rect x="907" y="605" width="3" height="3" fill="#fff"/><rect x="905" y="745" width="361" height="7" fill="#000"/><rect x="911" y="612" width="99" height="7" fill="#000"/><rect x="1003" y="600" width="7" height="19" fill="#000"/><rect x="1231" y="600" width="8" height="151" fill="#000"/><rect x="1231" y="606" width="35" height="8" fill="#000"/><rect x="1257" y="606" width="9" height="145" fill="#000"/><rect x="1071" y="600" width="6" height="146" fill="#000"/><rect x="1015" y="656" width="5" height="90" fill="#000"/><rect x="1015" y="655" width="9" height="2" fill="#000"/><rect x="1128" y="656" width="5" height="90" fill="#000"/><rect x="1124" y="655" width="9" height="2" fill="#000"/><rect x="1049" y="655" width="49" height="5" fill="#000"/><rect x="1020" y="718" width="108" height="2" fill="#000"/><rect x="871.5" y="647.5" width="34" height="68" fill="#fff" stroke="#000"/><rect x="907" y="649" width="3" height="35" fill="#fff"/><rect x="907" y="685" width="3" height="29" fill="#fff"/><rect x="1146" y="746" width="36" height="3" fill="#fff"/><rect x="1183" y="745" width="1" height="6" fill="#fff"/><rect x="1185" y="746" width="27" height="3" fill="#fff"/></g><g shape-rendering="crispEdges"><rect x="913.5" y="619.5" width="45.0" height="22.0" fill="#fff" stroke="#000"/><path d="M936.0 619.5 V649.5" stroke="#000" stroke-width="2"/></g><path d="M913.5 641.5 L936.0 649.5 L958.5 641.5" stroke="#000" fill="none"/><g shape-rendering="crispEdges"><rect x="1183.5" y="598.5" width="43.0" height="23.0" fill="#fff" stroke="#000"/><path d="M1205.0 598.5 V629.5" stroke="#000" stroke-width="2"/></g><path d="M1183.5 621.5 L1205.0 629.5 L1226.5 621.5" stroke="#000" fill="none"/><g shape-rendering="crispEdges"><rect x="935" y="669" width="57" height="75" fill="#fff" stroke="#a8a8a8" stroke-width="2"/><rect x="938.5" y="725.5" width="22" height="16" fill="#fff" stroke="#a8a8a8"/><rect x="965.5" y="725.5" width="23" height="16" fill="#fff" stroke="#a8a8a8"/><rect x="916.5" y="724.5" width="17" height="18" fill="#fff" stroke="#c0c0c0"/><rect x="993.5" y="724.5" width="17" height="18" fill="#fff" stroke="#c0c0c0"/></g><path d="M937 725 L992 717" stroke="#a8a8a8" fill="none"/><g shape-rendering="crispEdges"><rect x="1154" y="668" width="57" height="75" fill="#fff" stroke="#a8a8a8" stroke-width="2"/><rect x="1157.5" y="724.5" width="22" height="16" fill="#fff" stroke="#a8a8a8"/><rect x="1184.5" y="724.5" width="23" height="16" fill="#fff" stroke="#a8a8a8"/><rect x="1135.5" y="723.5" width="17" height="18" fill="#fff" stroke="#c0c0c0"/><rect x="1212.5" y="723.5" width="17" height="18" fill="#fff" stroke="#c0c0c0"/></g><path d="M1156 724 L1211 716" stroke="#a8a8a8" fill="none"/><path d="M1037 604 A28.5 28.5 0 0 0 1065.5 628 V600" stroke="#000" fill="none"/><path d="M1111 604 A30 30 0 0 1 1081 629 V600" stroke="#000" fill="none"/><rect x="1021.5" y="656.5" width="2" height="31" fill="none" stroke="#000"/><path d="M1024 688 A32 32 0 0 0 1050 657" stroke="#000" fill="none"/><rect x="1124.5" y="656.5" width="2" height="31" fill="none" stroke="#000"/><path d="M1124 688 A32 32 0 0 1 1098 657" stroke="#000" fill="none"/><rect x="1056.5" y="668.5" width="35" height="19" rx="9.5" fill="#fff" stroke="#000"/><path d="M1066 672 V684 M1070 672 V684 M1078 672 V684 M1082 672 V684 M1062 675 H1086 M1062 678 H1086 M1062 681 H1086" stroke="#000" fill="none"/><rect x="1071" y="666" width="6" height="24" fill="#000"/><rect x="1046.5" y="696.5" width="24" height="12" rx="4" fill="#fff" stroke="#c8c8c8"/><rect x="1078.5" y="696.5" width="24" height="12" rx="4" fill="#fff" stroke="#c8c8c8"/><path d="M1062 731.5 H1086 M1066 735.5 H1082" stroke="#000" fill="none"/><circle cx="1061.5" cy="731.5" r="1.5" fill="#fff" stroke="#000"/><circle cx="1086.5" cy="731.5" r="1.5" fill="#fff" stroke="#000"/><rect x="960.5" y="669.5" width="53" height="12" fill="none" stroke="#000" shape-rendering="crispEdges"/><rect x="1024.5" y="701.5" width="47" height="12" fill="none" stroke="#000" shape-rendering="crispEdges"/><rect x="1077.5" y="704.5" width="50" height="12" fill="none" stroke="#000" shape-rendering="crispEdges"/><rect x="1138.5" y="684.5" width="53" height="13" fill="none" stroke="#000" shape-rendering="crispEdges"/><rect x="1221.5" y="672.5" width="54" height="12" fill="none" stroke="#000" shape-rendering="crispEdges"/></svg>
<span class="t" style="left:967.0px;top:651px;font-size:13px;line-height:16px;letter-spacing:0.184px;">BED 3</span>
<span class="t" style="left:966.0px;top:668.0px;font-size:13px;line-height:16px;letter-spacing:0.086px;">L7-001</span>
<span class="t" style="left:1034.5px;top:684.0px;font-size:13px;line-height:16px;letter-spacing:-0.059px;">E/S 3</span>
<span class="t" style="left:1030.0px;top:700.0px;font-size:13px;line-height:16px;letter-spacing:0.086px;">L7-002</span>
<span class="t" style="left:1084.5px;top:686.0px;font-size:13px;line-height:16px;letter-spacing:-0.059px;">E/S 4</span>
<span class="t" style="left:1083.0px;top:704.0px;font-size:13px;line-height:16px;letter-spacing:0.086px;">L7-008</span>
<span class="t" style="left:1145.0px;top:666px;font-size:13px;line-height:16px;letter-spacing:0.184px;">BED 4</span>
<span class="t" style="left:1144.0px;top:684px;font-size:13px;line-height:16px;letter-spacing:0.086px;">L7-007</span>
<span class="t" style="left:1227.5px;top:654.0px;font-size:13px;line-height:16px;letter-spacing:0.053px;">RISER</span>
<span class="t" style="left:1227.0px;top:672.0px;font-size:13px;line-height:16px;letter-spacing:0.086px;">L7-025</span>
<div class="r" style="left:859px;top:807px;width:329px;height:18px;background:#f0f0f0;"></div>
<div class="r" style="left:1188px;top:808px;width:119px;height:17px;background:#f0f0f0;"></div>
<span class="t" style="left:883.0px;top:809px;font-size:12px;line-height:15px;letter-spacing:-0.386px;">1 : 100</span>
<svg style="left:930px;top:800px" width="280" height="27" viewBox="930 800 280 27"><defs><linearGradient id="gq" x1="0" y1="0" x2="0" y2="1"><stop offset="0" stop-color="#dfe2ea"/><stop offset="1" stop-color="#fff"/></linearGradient></defs><rect x="938.6" y="809" width="14.5" height="10.3" rx="1" fill="url(#gq)" stroke="#3a3c46" stroke-width="1.2"/><path d="M960.8 814.3 H970.8 V820 H960.8 Z" fill="#dfe3ea" stroke="#3a3c46" stroke-width="1.1"/><path d="M960.8 814.3 L964.6 809.8 H974.2 L970.8 814.3 Z" fill="#f4f5f8" stroke="#3a3c46" stroke-width="1.1"/><path d="M974.2 809.8 V815.8 L970.8 820 V814.3 Z" fill="#c6cbd6" stroke="#3a3c46" stroke-width="1.1"/><path d="M985.2 806.8 V820 M978.6 813.400 H991.8 M980.5 808.7 L989.9 818.100 M989.9 808.7 L980.5 818.1" stroke="#f0a020" stroke-width="1.1"/><circle cx="985.2" cy="813.4" r="4.1" fill="#ffe680" stroke="#f0a828" stroke-width="1"/><circle cx="984.2" cy="812.400" r="2" fill="#fffbe0"/><path d="M987.8 813.4 L993.800 819.6 M993.8 813.4 L987.8 819.6" stroke="#e0141e" stroke-width="2.1"/><circle cx="1007.3" cy="813.2" r="3.8" fill="none" stroke="#c4c4c4" stroke-width="1.1" stroke-dasharray="2 1.2"/><path d="M1004.5 819.500 H1008" stroke="#b8b8b8" stroke-width="1.4"/><path d="M1010 814 L1015.5 820 M1015.5 814 L1010 820" stroke="#cfcfcf" stroke-width="1.3"/><path d="M1024.9 820.400 V810.8 H1036.6" stroke="#1c62b4" stroke-width="1.6" fill="none"/><path d="M1027.4 820.4 V813.3 H1036" stroke="#5a96dc" stroke-width="1.1" fill="none"/><path d="M1021 817.200 H1024 M1031 808.7 H1034" stroke="#222" stroke-width="1.2"/><path d="M1030 813.200 L1036.4 820 M1036.4 813.2 L1030 820" stroke="#e0141e" stroke-width="2.1"/><path d="M1045.9 820.4 V810.8 H1053" stroke="#1c62b4" stroke-width="1.6" fill="none"/><path d="M1048.4 820.4 V813.300 H1052" stroke="#5a96dc" stroke-width="1.1" fill="none"/><path d="M1042 817.2 H1045 M1050.5 808.7 H1053" stroke="#222" stroke-width="1.2"/><path d="M1048.5 816.200 H1051" stroke="#e0141e" stroke-width="1.2"/><circle cx="1055" cy="813.6" r="3" fill="#fff" stroke="#2a8af0" stroke-width="1.5"/><path d="M1054 817.3 H1056 V820 H1054 Z" fill="#555" stroke="#333" stroke-width="0.6"/><path d="M1063.3 812.6 Q1065.5 810.500 1067.5 813.5 L1069.5 817" stroke="#222" stroke-width="1.2" fill="none"/><path d="M1071.5 809.600 Q1075 808.6 1077 812.5" stroke="#222" stroke-width="1.2" fill="none"/><ellipse cx="1071" cy="817.3" rx="2.800" ry="2.2" fill="#cfe4f8" stroke="#222" stroke-width="1.1" transform="rotate(-20 1071 817.3)"/><ellipse cx="1076.2" cy="814.5" rx="2.6" ry="2.2" fill="#cfe4f8" stroke="#222" stroke-width="1.1" transform="rotate(-20 1076.2 814.5)"/><circle cx="1092.1" cy="813.9" r="2.9" fill="#fff" stroke="#2a8af0" stroke-width="1.5"/><path d="M1091.1 817.5 H1093.1 V820 H1091.1 Z" fill="#555" stroke="#333" stroke-width="0.6"/><path d="M1110.5 811.2 L1114.400 809.2 L1118.3 811.2 V814 L1114.4 816 L1110.5 814 Z" fill="#8cd060" stroke="#2c8c28" stroke-width="1"/><path d="M1106.3 815 L1110 813.2 L1113.700 815 V818.8 L1110 820.600 L1106.3 818.8 Z" fill="#c8e0fa" stroke="#1c6ad0" stroke-width="1.3"/><path d="M1113.6 815 L1119.600 820.8 M1119.6 815 L1113.6 820.8" stroke="#e0141e" stroke-width="2.1"/><rect x="1127.8" y="811" width="12.4" height="8.8" fill="#e4e6ee" stroke="#111" stroke-width="1.25"/><path d="M1129.5 810 H1131 M1133 810 H1134.5 M1136.500 810 H1138 M1129.5 820.800 H1131 M1133 820.8 H1134.5" stroke="#111" stroke-width="1.4"/><rect x="1134.8" y="813.6" width="6" height="6.6" fill="#f0f0f0" stroke="#111" stroke-width="1.2" stroke-dasharray="2.2 1.1"/><rect x="1136.800" y="815.8" width="2" height="2.2" fill="#fff" stroke="#111" stroke-width="0.9"/><path d="M1147.5 820 V813.5 L1153.500 809.5 H1159 M1150.5 820 V814 M1153.5 820 V813.5 M1156.5 820 V814 M1147.5 816.700 H1157.5 M1159 812 V818 M1158.5 820.5 H1160.5" stroke="#c2c2c2" stroke-width="1.1" fill="none"/><path d="M1168 808 V820.3 M1183.8 808 V812.600 M1168 810.3 H1183.8" stroke="#2a3442" stroke-width="1.3" fill="none"/><path d="M1169 818.200 H1176" stroke="#888" stroke-width="1" stroke-dasharray="1.5 1.2"/><rect x="1177.300" y="815.3" width="6.6" height="5" rx="0.8" fill="#b4b4b4" stroke="#333" stroke-width="1.1"/><path d="M1178.600 815.300 V813.8 Q1180.6 811.6 1182.6 813.8 V815.3" stroke="#333" stroke-width="1.1" fill="none"/><path d="M1198.600 812.3 L1194.2 815.700 L1198.6 819" stroke="#444" stroke-width="2" fill="none"/></svg>
<div class="r" style="left:870px;top:12px;width:437px;height:593px;background:#f0f0f0;border:1px solid #7a7a7a;box-shadow:0 3px 14px rgba(0,0,0,0.4);"></div>
<div class="r" style="left:871px;top:13px;width:435px;height:30px;background:#fff;"></div>
<span class="t" style="left:879.0px;top:21px;font-size:12px;line-height:15px;letter-spacing:-0.203px;">Type Properties</span>
<svg style="left:1285px;top:21px" width="12" height="12" viewBox="0 0 12 12"><path d="M0.7 0.7 L11.3 11.3 M11.3 0.7 L0.7 11.3" stroke="#111" stroke-width="1.1" fill="none"/></svg>
<span class="t" style="left:891.0px;top:58px;font-size:12px;line-height:15px;letter-spacing:-0.525px;">Family:</span>
<span class="t" style="left:891.0px;top:91.0px;font-size:12px;line-height:15px;letter-spacing:-0.372px;">Type:</span>
<div class="r" style="left:961px;top:54px;width:213px;height:21px;background:#e1e1e1;border:1px solid #adadad;"></div>
<svg style="left:1159px;top:61px" width="11" height="7" viewBox="0 0 11 7"><path d="M1 1 L5.5 5.5 L10 1" stroke="#444" stroke-width="1.1" fill="none"/></svg>
<span class="t" style="left:964.5px;top:58px;font-size:12px;line-height:15px;letter-spacing:-1.004px;">Bed_Box_FUR</span>
<div class="r" style="left:961px;top:87px;width:213px;height:21px;background:#e1e1e1;border:1px solid #adadad;"></div>
<svg style="left:1159px;top:94px" width="11" height="7" viewBox="0 0 11 7"><path d="M1 1 L5.5 5.5 L10 1" stroke="#444" stroke-width="1.1" fill="none"/></svg>
<span class="t" style="left:964.5px;top:91px;font-size:12px;line-height:15px;letter-spacing:-0.702px;">1530 x 2030mm - Queen</span>
<div class="r" style="left:1187px;top:55px;width:106px;height:22px;background:#e1e1e1;border:1px solid #adadad;"></div>
<span class="t" style="left:1222.5px;top:59.0px;font-size:12px;line-height:15px;letter-spacing:-0.243px;">Load...</span>
<div class="r" style="left:1187px;top:86px;width:106px;height:22px;background:#e1e1e1;border:1px solid #adadad;"></div>
<span class="t" style="left:1211.5px;top:91.0px;font-size:12px;line-height:15px;letter-spacing:-0.253px;">Duplicate...</span>
<div class="r" style="left:1187px;top:117px;width:106px;height:22px;background:#e1e1e1;border:1px solid #adadad;"></div>
<span class="t" style="left:1214.5px;top:121.0px;font-size:12px;line-height:15px;letter-spacing:-0.484px;">Rename...</span>
<span class="t" style="left:891.5px;top:147px;font-size:12px;line-height:15px;letter-spacing:-0.625px;">Type Parameters</span>
<div class="r" style="left:892px;top:167px;width:400px;height:376px;background:#fff;border:1px solid #828790;border-top:2px solid #696969;border-left:2px solid #696969;"></div>
<div class="r" style="left:894px;top:169px;width:379px;height:21px;background:#f0f0f0;border:1px solid #fff;border-bottom:1px solid #000;height:21px;"></div>
<div class="r" style="left:1068px;top:169px;width:1px;height:21px;background:#000;"></div>
<div class="r" style="left:1069px;top:169px;width:1px;height:20px;background:#fff;"></div>
<div class="r" style="left:1067px;top:169px;width:1px;height:20px;background:#fff;"></div>
<div class="r" style="left:1260px;top:169px;width:1px;height:21px;background:#000;"></div>
<div class="r" style="left:1272px;top:169px;width:1px;height:21px;background:#000;"></div>
<span class="t" style="left:955.0px;top:172px;font-size:12px;line-height:15px;letter-spacing:-0.226px;">Parameter</span>
<span class="t" style="left:1151.5px;top:172px;font-size:12px;line-height:15px;letter-spacing:-0.163px;">Value</span>
<span class="t" style="left:1263.3px;top:172px;font-size:12px;line-height:15px;">=</span>
<div class="r" style="left:1273px;top:169px;width:18px;height:373px;background:#f0f0f0;"></div>
<div class="r" style="left:1275px;top:186px;width:15px;height:130px;background:#cdcdcd;"></div>
<svg style="left:1278px;top:175px" width="9" height="7" viewBox="0 0 9 7"><path d="M1 5.700 L4.500 2 L8 5.7" stroke="#5a5a5a" stroke-width="2" fill="none"/></svg>
<svg style="left:1278px;top:530px" width="9" height="7" viewBox="0 0 9 7"><path d="M1 1.300 L4.500 5 L8 1.3" stroke="#5a5a5a" stroke-width="2" fill="none"/></svg>
<div class="r" style="left:894px;top:193px;width:379px;height:19px;background:#99b4d1;"></div>
<span class="t" style="left:896.0px;top:195px;font-size:12px;line-height:15px;font-weight:bold;letter-spacing:-0.396px;">Materials and Finishes</span>
<svg style="left:1259.5px;top:198px" width="8" height="10" viewBox="0 0 8 10"><path d="M1 4.2 L4 1.2 L7 4.2 M1 8.600 L4 5.6 L7 8.6" stroke="#000" stroke-width="1.3" fill="none"/></svg>
<span class="t" style="left:896.0px;top:213px;font-size:12px;line-height:15px;letter-spacing:-0.121px;">Frame Material</span>
<span class="t" style="left:1071.0px;top:213px;font-size:12px;line-height:15px;letter-spacing:-0.081px;">&lt;By Category&gt;</span>
<span class="t" style="left:896.0px;top:231px;font-size:12px;line-height:15px;letter-spacing:-0.061px;">Mattress Material</span>
<span class="t" style="left:1071.0px;top:231px;font-size:12px;line-height:15px;letter-spacing:-0.081px;">&lt;By Category&gt;</span>
<div class="r" style="left:894px;top:251px;width:379px;height:19px;background:#99b4d1;"></div>
<span class="t" style="left:896.0px;top:253px;font-size:12px;line-height:15px;font-weight:bold;letter-spacing:-0.402px;">Dimensions</span>
<svg style="left:1259.5px;top:256px" width="8" height="10" viewBox="0 0 8 10"><path d="M1 4.2 L4 1.2 L7 4.2 M1 8.600 L4 5.6 L7 8.6" stroke="#000" stroke-width="1.3" fill="none"/></svg>
<span class="t" style="left:896.0px;top:271px;font-size:12px;line-height:15px;letter-spacing:-0.117px;">Length</span>
<span class="t" style="left:1071.0px;top:271px;font-size:12px;line-height:15px;letter-spacing:-0.617px;">2030.0</span>
<span class="t" style="left:896.0px;top:289px;font-size:12px;line-height:15px;letter-spacing:0.263px;">Width</span>
<span class="t" style="left:1071.0px;top:289px;font-size:12px;line-height:15px;letter-spacing:-0.617px;">1530.0</span>
<div class="r" style="left:894px;top:309px;width:379px;height:19px;background:#99b4d1;"></div>
<span class="t" style="left:896.0px;top:311px;font-size:12px;line-height:15px;font-weight:bold;letter-spacing:-0.001px;">Identity Data</span>
<svg style="left:1259.5px;top:314px" width="8" height="10" viewBox="0 0 8 10"><path d="M1 4.2 L4 1.2 L7 4.2 M1 8.600 L4 5.6 L7 8.6" stroke="#000" stroke-width="1.3" fill="none"/></svg>
<span class="t" style="left:896.0px;top:329px;font-size:12px;line-height:15px;color:#6d6d6d;letter-spacing:-0.270px;">Type Image</span>
<span class="t" style="left:896.0px;top:347px;font-size:12px;line-height:15px;letter-spacing:-0.150px;">Keynote</span>
<span class="t" style="left:896.0px;top:365px;font-size:12px;line-height:15px;letter-spacing:0.263px;">Model</span>
<span class="t" style="left:896.0px;top:383px;font-size:12px;line-height:15px;letter-spacing:0.108px;">Manufacturer</span>
<span class="t" style="left:896.0px;top:401px;font-size:12px;line-height:15px;letter-spacing:0.048px;">Type Comments</span>
<span class="t" style="left:1071.0px;top:401px;font-size:12px;line-height:15px;letter-spacing:-1.115px;">XYZ</span>
<span class="t" style="left:896.0px;top:419px;font-size:12px;line-height:15px;letter-spacing:-0.672px;">URL</span>
<span class="t" style="left:896.0px;top:437px;font-size:12px;line-height:15px;letter-spacing:0.179px;">Description</span>
<span class="t" style="left:1071.0px;top:437px;font-size:12px;line-height:15px;letter-spacing:-0.338px;">Bed queen size</span>
<span class="t" style="left:896.0px;top:455px;font-size:12px;line-height:15px;letter-spacing:-0.157px;">Assembly Code</span>
<span class="t" style="left:896.0px;top:473px;font-size:12px;line-height:15px;letter-spacing:-0.172px;">Cost</span>
<span class="t" style="left:1071.0px;top:473px;font-size:12px;line-height:15px;letter-spacing:-0.342px;">3000.00</span>
<span class="t" style="left:896.0px;top:491px;font-size:12px;line-height:15px;color:#6d6d6d;letter-spacing:0.031px;">Assembly Description</span>
<span class="t" style="left:896.0px;top:509px;font-size:12px;line-height:15px;letter-spacing:-0.002px;">Type Mark</span>
<span class="t" style="left:896.0px;top:527px;font-size:12px;line-height:15px;letter-spacing:0.052px;">drofus_item_number</span>
<svg style="left:0;top:0" width="1307" height="827" viewBox="0 0 1307 827" shape-rendering="crispEdges"><path d="M894 229.5 H1273" stroke="#606060" stroke-width="1" stroke-dasharray="1 1" fill="none"/><rect x="1262.5" y="212.5" width="9" height="15" fill="#e1e1e1" stroke="#adadad"/><path d="M894 247.5 H1273" stroke="#606060" stroke-width="1" stroke-dasharray="1 1" fill="none"/><rect x="1262.5" y="230.5" width="9" height="15" fill="#e1e1e1" stroke="#adadad"/><path d="M894 287.5 H1273" stroke="#606060" stroke-width="1" stroke-dasharray="1 1" fill="none"/><rect x="1262.5" y="270.5" width="9" height="15" fill="#e1e1e1" stroke="#adadad"/><path d="M894 305.5 H1273" stroke="#606060" stroke-width="1" stroke-dasharray="1 1" fill="none"/><rect x="1262.5" y="288.5" width="9" height="15" fill="#e1e1e1" stroke="#adadad"/><path d="M894 345.5 H1273" stroke="#606060" stroke-width="1" stroke-dasharray="1 1" fill="none"/><path d="M894 363.5 H1273" stroke="#606060" stroke-width="1" stroke-dasharray="1 1" fill="none"/><rect x="1262.5" y="346.5" width="9" height="15" fill="#e1e1e1" stroke="#adadad"/><path d="M894 381.5 H1273" stroke="#606060" stroke-width="1" stroke-dasharray="1 1" fill="none"/><rect x="1262.5" y="364.5" width="9" height="15" fill="#e1e1e1" stroke="#adadad"/><path d="M894 399.5 H1273" stroke="#606060" stroke-width="1" stroke-dasharray="1 1" fill="none"/><rect x="1262.5" y="382.5" width="9" height="15" fill="#e1e1e1" stroke="#adadad"/><path d="M894 417.5 H1273" stroke="#606060" stroke-width="1" stroke-dasharray="1 1" fill="none"/><rect x="1262.5" y="400.5" width="9" height="15" fill="#e1e1e1" stroke="#adadad"/><path d="M894 435.5 H1273" stroke="#606060" stroke-width="1" stroke-dasharray="1 1" fill="none"/><rect x="1262.5" y="418.5" width="9" height="15" fill="#e1e1e1" stroke="#adadad"/><path d="M894 453.5 H1273" stroke="#606060" stroke-width="1" stroke-dasharray="1 1" fill="none"/><rect x="1262.5" y="436.5" width="9" height="15" fill="#e1e1e1" stroke="#adadad"/><path d="M894 471.5 H1273" stroke="#606060" stroke-width="1" stroke-dasharray="1 1" fill="none"/><rect x="1262.5" y="454.5" width="9" height="15" fill="#e1e1e1" stroke="#adadad"/><path d="M894 489.5 H1273" stroke="#606060" stroke-width="1" stroke-dasharray="1 1" fill="none"/><rect x="1262.5" y="472.5" width="9" height="15" fill="#e1e1e1" stroke="#adadad"/><path d="M894 507.5 H1273" stroke="#606060" stroke-width="1" stroke-dasharray="1 1" fill="none"/><path d="M894 525.5 H1273" stroke="#606060" stroke-width="1" stroke-dasharray="1 1" fill="none"/><path d="M894 543.5 H1273" stroke="#606060" stroke-width="1" stroke-dasharray="1 1" fill="none"/><rect x="1262.5" y="526.5" width="9" height="15" fill="#e1e1e1" stroke="#adadad"/><path d="M1068.5 212 V248 M1068.5 270 V306 M1068.5 328 V543" stroke="#606060" stroke-width="1" stroke-dasharray="1 1" fill="none"/><path d="M1260.5 212 V248 M1260.5 270 V306 M1260.5 328 V543" stroke="#606060" stroke-width="1" stroke-dasharray="1 1" fill="none"/><path d="M1273.5 212 V248 M1273.5 270 V306 M1273.5 328 V543" stroke="#606060" stroke-width="1" stroke-dasharray="1 1" fill="none"/><path d="M894 248.500 H1273 M894 306.5 H1273" stroke="#606060" stroke-width="1" stroke-dasharray="1 1" fill="none"/><rect x="1068.5" y="212.5" width="192" height="17" fill="#fff" stroke="#000"/></svg>
<span class="t" style="left:1071.0px;top:213px;font-size:12px;line-height:15px;letter-spacing:-0.081px;">&lt;By Category&gt;</span>
<div class="r" style="left:893px;top:569px;width:88px;height:22px;background:#e1e1e1;border:1px solid #adadad;"></div>
<span class="t" style="left:907.5px;top:573.0px;font-size:12px;line-height:15px;letter-spacing:-0.103px;">&lt;&lt; Preview</span>
<div class="r" style="left:1013px;top:569px;width:88px;height:22px;background:#e1e1e1;border:2px solid #0078d7;"></div>
<span class="t" style="left:1049.0px;top:573.0px;font-size:12px;line-height:15px;letter-spacing:-0.672px;">OK</span>
<div class="r" style="left:1109px;top:569px;width:88px;height:22px;background:#e1e1e1;border:1px solid #adadad;"></div>
<span class="t" style="left:1136.0px;top:573.0px;font-size:12px;line-height:15px;letter-spacing:-0.560px;">Cancel</span>
<div class="r" style="left:1205px;top:569px;width:88px;height:22px;background:#cccccc;border:1px solid #bfbfbf;"></div>
<span class="t" style="left:1234.5px;top:573.0px;font-size:12px;line-height:15px;color:#838383;letter-spacing:-0.206px;">Apply</span>
<svg style="left:1293px;top:592px" width="10" height="10" viewBox="0 0 10 10" shape-rendering="crispEdges"><path d="M7 1h2v2h-2z M4 4h2v2h-2z M7 4h2v2h-2z M1 7h2v2h-2z M4 7h2v2h-2z M7 7h2v2h-2z" fill="#bfbfbf"/></svg>
<div class="r" style="left:336px;top:405px;width:465px;height:79px;border:3px solid #f94040;box-shadow:0 2px 4px rgba(0,0,0,0.5), inset 0 2px 3px rgba(0,0,0,0.42), inset 1px 0 2px rgba(0,0,0,0.2);"></div>
<div class="r" style="left:760px;top:792px;width:83px;height:23px;border:3px solid #f94040;box-shadow:0 2px 4px rgba(0,0,0,0.5), inset 0 2px 3px rgba(0,0,0,0.42), inset 1px 0 2px rgba(0,0,0,0.2);"></div>
<div class="r" style="left:1066px;top:397px;width:196px;height:23px;border:3px solid #f94040;box-shadow:0 2px 4px rgba(0,0,0,0.5), inset 0 2px 3px rgba(0,0,0,0.42), inset 1px 0 2px rgba(0,0,0,0.2);"></div>
<svg style="left:800px;top:395px;filter:drop-shadow(0 3px 2px rgba(0,0,0,0.42))" width="270" height="26" viewBox="800 395 270 26"><path d="M812.8 407.9 H1045" stroke="#f94040" stroke-width="4.8" stroke-linecap="round" fill="none"/><path d="M1043 400.6 L1057.600 407.9 L1043 415.3 Z" fill="#f94040"/></svg>
</body></html>
